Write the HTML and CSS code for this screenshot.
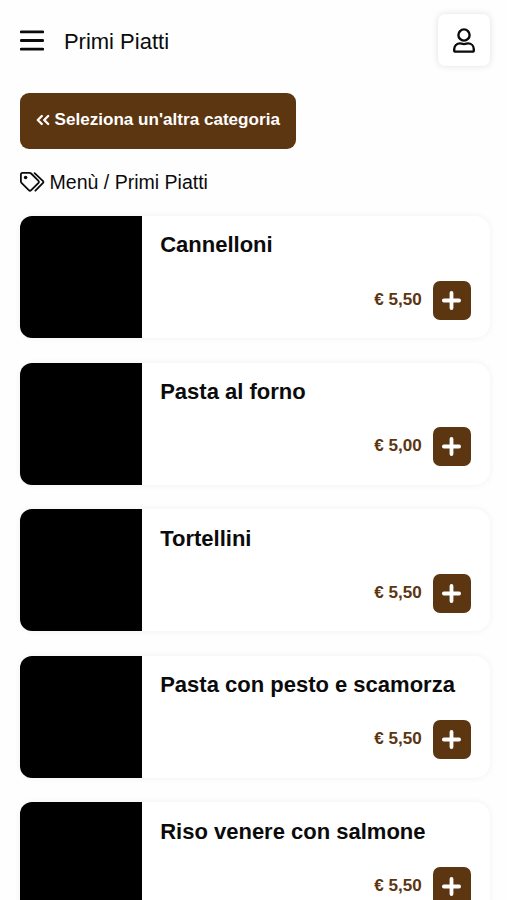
FILE: index.html
```
<!DOCTYPE html>
<html lang="it">
<head>
<meta charset="utf-8">
<title>Primi Piatti</title>
<link rel="stylesheet" href="styles.css">
</head>
<body>
<svg class="defs" aria-hidden="true">
  <symbol id="plus" viewBox="0 0 20 20"><path d="M10 2v16M2 10h16" fill="none" stroke="currentColor" stroke-width="4" stroke-linecap="round"/></symbol>
</svg>
<header class="header">
  <svg class="burger" viewBox="0 0 24 21"><path d="M1.2 1.9h21.6M1.2 10.5h21.6M1.2 19.1h21.6" fill="none" stroke="currentColor" stroke-width="2.8" stroke-linecap="round"/></svg>
  <h1 class="title">Primi Piatti</h1>
  <button class="user" aria-label="Profilo">
    <svg class="user-icon" viewBox="0 0 22 25"><g fill="none" stroke="currentColor" stroke-width="2.4" stroke-linejoin="round"><circle cx="11" cy="7" r="5.6"/><path d="M7 15.4C3.8 15.4 1.2 17.8 1.2 21V22.2Q1.2 23.6 2.6 23.6H19.4Q20.8 23.6 20.8 22.2V21C20.8 17.8 18.2 15.4 15 15.4C13.8 15.4 13 16.1 11 16.1S8.2 15.4 7 15.4Z"/></g></svg>
  </button>
</header>
<main class="main">
  <a class="back">
    <svg class="chevrons" viewBox="0 0 14 12"><path d="M5.8 2L1.8 6L5.8 10M12.2 2L8.2 6L12.2 10" fill="none" stroke="currentColor" stroke-width="2.3" stroke-linecap="round" stroke-linejoin="round"/></svg>
    <span>Seleziona un'altra categoria</span>
  </a>
  <nav class="crumbs">
    <svg class="tags" viewBox="0 0 25 20"><g fill="none" stroke="currentColor" stroke-width="1.8" stroke-linejoin="round" stroke-linecap="round"><path d="M2.4 .9H9.7Q10.5 .9 11.1 1.5L18.3 8.7Q19.5 9.9 18.3 11.1L11.2 18.2Q10 19.4 8.8 18.2L1.5 10.9Q.9 10.3 .9 9.5V2.4Q.9 .9 2.4 .9Z"/><path d="M14.6 1.1L22.8 8.9Q24 10 22.8 11.2L15.4 18.7"/></g><circle cx="5.6" cy="5.5" r="1.8" fill="currentColor"/></svg>
    <span>Menù / Primi Piatti</span>
  </nav>
  <section class="list">
    <article class="card"><div class="photo"></div><div class="info"><h2 class="name">Cannelloni</h2><div class="buy"><span>€ 5,50</span><button class="add" aria-label="Aggiungi"><svg><use href="#plus"/></svg></button></div></div></article>
    <article class="card"><div class="photo"></div><div class="info"><h2 class="name">Pasta al forno</h2><div class="buy"><span>€ 5,00</span><button class="add" aria-label="Aggiungi"><svg><use href="#plus"/></svg></button></div></div></article>
    <article class="card"><div class="photo"></div><div class="info"><h2 class="name">Tortellini</h2><div class="buy"><span>€ 5,50</span><button class="add" aria-label="Aggiungi"><svg><use href="#plus"/></svg></button></div></div></article>
    <article class="card"><div class="photo"></div><div class="info"><h2 class="name">Pasta con pesto e scamorza</h2><div class="buy"><span>€ 5,50</span><button class="add" aria-label="Aggiungi"><svg><use href="#plus"/></svg></button></div></div></article>
    <article class="card"><div class="photo"></div><div class="info"><h2 class="name">Riso venere con salmone</h2><div class="buy"><span>€ 5,50</span><button class="add" aria-label="Aggiungi"><svg><use href="#plus"/></svg></button></div></div></article>
  </section>
</main>
</body>
</html>
```
FILE: styles.css
```
* { box-sizing: border-box; }
html, body { height: 100%; overflow: hidden; }
body { margin: 0; background: #fefefe; color: #0b0b0c; font-family: "Liberation Sans", Arial, sans-serif; }
svg { display: block; flex: none; }
button { border: 0; padding: 0; color: inherit; font: inherit; }
.defs { display: none; }
.header { display: flex; align-items: center; height: 80px; padding: 0 17px 0 19.5px; }
.burger { width: 24px; height: 21px; margin-top: 1px; }
.title { margin: 3px 0 0 20.4px; font-size: 22px; font-weight: 400; line-height: 26px; }
.user { display: grid; place-items: center; width: 52px; height: 52px; margin-left: auto; border-radius: 7px; background: #fff; box-shadow: 0 0 7px rgba(0, 0, 0, .12); }
.user-icon { width: 22px; height: 25px; margin-right: 1px; }
.main { padding: 13px 17.5px 0 19.5px; }
.back { display: flex; align-items: center; gap: 5px; width: 276.5px; height: 55.5px; padding: 0 0 1px 16px; border-radius: 9px; background: #5c3511; color: #fff; font-size: 17.1px; font-weight: 700; white-space: nowrap; }
.chevrons { width: 14px; height: 12px; }
.crumbs { display: flex; align-items: center; gap: 5px; height: 24px; margin-top: 21.5px; font-size: 19.55px; }
.tags { width: 25px; height: 20px; margin-bottom: 1px; }
.list { display: grid; gap: 24.4px; margin-top: 22px; }
.card { display: flex; height: 122.2px; border-radius: 15px; background: #fff; box-shadow: 0 0 7px rgba(0, 0, 0, .06); }
.photo { width: 122.2px; border-radius: 12px 0 0 12px; background: #000; }
.info { display: flex; flex: 1; flex-direction: column; justify-content: space-between; padding: 16.4px 18.4px 18.6px 18.5px; }
.name { margin: 0; font-size: 22px; line-height: 26px; white-space: nowrap; }
.buy { display: flex; align-items: center; justify-content: flex-end; gap: 11px; color: #5c3511; font-size: 17.1px; font-weight: 700; }
.buy span { margin-bottom: 1px; }
.add { display: grid; place-items: center; width: 38.4px; height: 39px; border-radius: 7px; background: #5c3511; color: #fff; }
.add svg { width: 19px; height: 19px; }
```
